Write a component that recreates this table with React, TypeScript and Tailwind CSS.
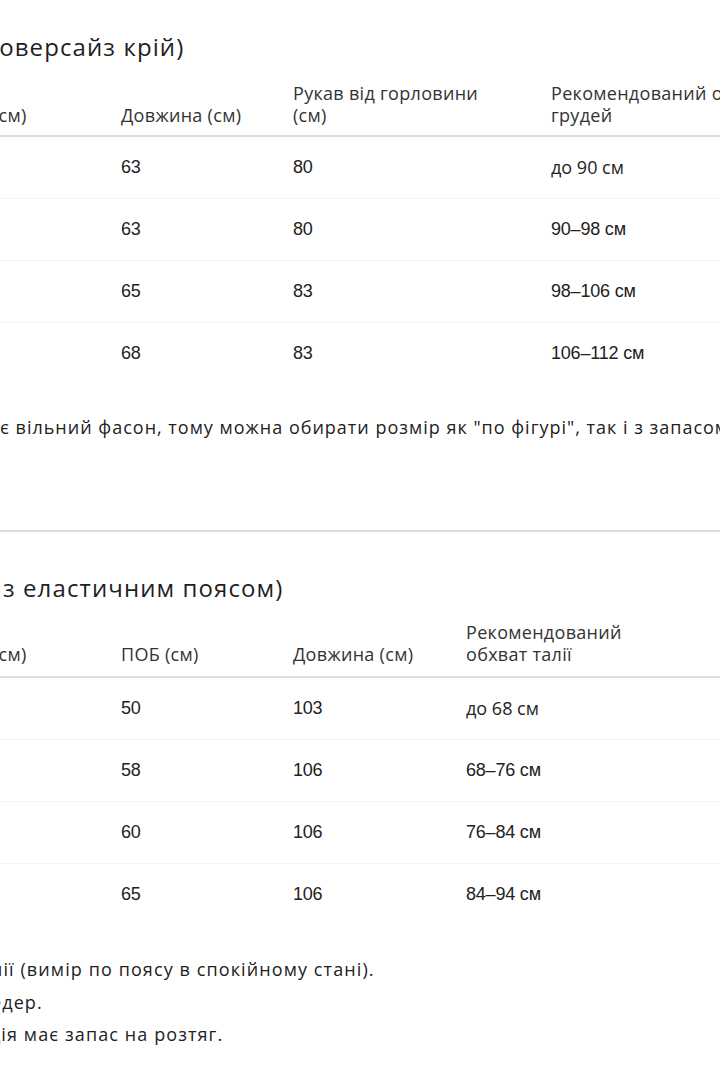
import React from "react";

type Row = { a: string; b: string; c: string };

const hoodieRows: Row[] = [
  { a: "63", b: "80", c: "до 90 см" },
  { a: "63", b: "80", c: "90–98 см" },
  { a: "65", b: "83", c: "98–106 см" },
  { a: "68", b: "83", c: "106–112 см" },
];

const pantsRows: Row[] = [
  { a: "50", b: "103", c: "до 68 см" },
  { a: "58", b: "106", c: "68–76 см" },
  { a: "60", b: "106", c: "76–84 см" },
  { a: "65", b: "106", c: "84–94 см" },
];

function Value({ text }: { text: string }) {
  const soft = text.startsWith("до");
  return (
    <span className={soft ? "font-['Open_Sans',sans-serif] text-[18px]" : "font-['Liberation_Sans',Arial,sans-serif] text-[18px] tracking-[-0.2px]"}>
      {text}
    </span>
  );
}

function SizeTable({ cols, head, rows, headPad }: { cols: string; head: React.ReactNode[]; rows: Row[]; headPad: string }) {
  return (
    <div className="w-[720px]">
      <div className={`grid ${cols} items-end border-b-2 border-[#dedede] text-[18px] leading-[22px] tracking-[0.3px] text-[#333] ${headPad}`}>
        {head.map((h, i) => (
          <div key={i} className="whitespace-nowrap">
            {h}
          </div>
        ))}
      </div>
      {rows.map((r, i) => (
        <div key={i} className={`grid ${cols} h-[62px] items-center border-b border-[#f3f3f3] text-[#222] last:border-transparent`}>
          <div />
          <div><Value text={r.a} /></div>
          <div><Value text={r.b} /></div>
          <div className="whitespace-nowrap"><Value text={r.c} /></div>
        </div>
      ))}
    </div>
  );
}

export default function App() {
  return (
    <div className="h-[1080px] w-[720px] overflow-hidden bg-white pt-[32px] font-['Open_Sans',sans-serif] text-[#222]">
      <h2 className="-ml-[9px] whitespace-nowrap text-[24px] leading-[30px] tracking-[1.1px] text-[#1f1f1f]">(оверсайз крій)</h2>

      <div className="mt-[20px]">
        <SizeTable
          cols="grid-cols-[121px_172px_258px_280px]"
          headPad="pb-[9px]"
          head={[
            <span className="-ml-[7px]">(см)</span>,
            "Довжина (см)",
            <>Рукав від горловини<br />(см)</>,
            <>Рекомендований обхват<br />грудей</>,
          ]}
          rows={hoodieRows}
        />
      </div>

      <p className="mt-[30px] whitespace-nowrap text-[18px] leading-[24px] tracking-[1px] text-[#222]">
        є вільний фасон, тому можна обирати розмір як "по фігурі", так і з запасом.
      </p>

      <div className="mt-[91px] border-t-2 border-[#dcdcdc]" />

      <h2 className="mt-[41px] whitespace-nowrap pl-[3px] text-[24px] leading-[30px] tracking-[1.1px] text-[#1f1f1f]">з еластичним поясом)</h2>

      <div className="mt-[18px]">
        <SizeTable
          cols="grid-cols-[121px_172px_173px_220px]"
          headPad="pb-[11px]"
          head={[
            <span className="-ml-[7px]">(см)</span>,
            "ПОБ (см)",
            "Довжина (см)",
            <>Рекомендований<br />обхват талії</>,
          ]}
          rows={pantsRows}
        />
      </div>

      <ul className="mt-[31px] text-[18px] leading-[24px] tracking-[1.1px] text-[#222]">
        <li className="-ml-[8px] mb-[9px] whitespace-nowrap">лії (вимір по поясу в спокійному стані).</li>
        <li className="-ml-[9px] mb-[8px] whitespace-nowrap">едер.</li>
        <li className="-ml-[11px] whitespace-nowrap">ція має запас на розтяг.</li>
      </ul>
    </div>
  );
}
